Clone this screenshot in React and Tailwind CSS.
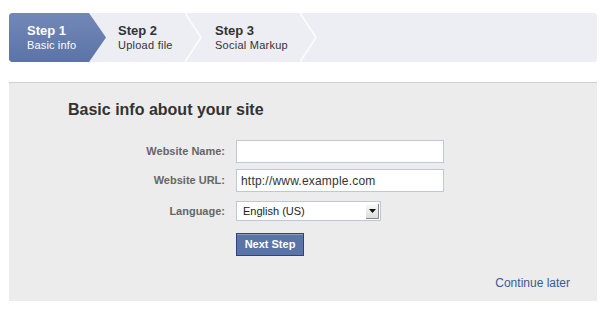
import React from "react";

function Chevron() {
  return (
    <svg width="17" height="49" viewBox="0 0 17 49" className="shrink-0 block">
      <polyline points="0,0 16,24.5 0,49" fill="none" stroke="#fbfbfd" strokeWidth="1.8" />
    </svg>
  );
}

export default function App() {
  const font = { fontFamily: '"Liberation Sans", Arial, sans-serif' };
  return (
    <div className="w-[610px] h-[316px] bg-white pt-[13px] px-[9px] text-[#333]" style={font}>
      {/* Steps bar */}
      <div className="flex h-[49px] w-[588px] bg-[#eceef4] rounded-[3px] overflow-hidden">
        <div
          className="w-[97px] shrink-0 h-full bg-gradient-to-b from-[#7288b8] to-[#5c73a6] text-white pl-[18px] flex flex-col justify-center"
          style={{ clipPath: "polygon(0 0, 80px 0, 97px 50%, 80px 100%, 0 100%)", borderRadius: "3px 0 0 3px" }}
        >
          <div className="text-[13px] font-bold leading-[15px]">Step 1</div>
          <div className="text-[11px] leading-[14px] tracking-[0.15px]">Basic info</div>
        </div>
        <div className="w-[79px] shrink-0 pl-[12px] flex flex-col justify-center">
          <div className="text-[13px] font-bold leading-[15px] text-[#333]">Step 2</div>
          <div className="text-[11px] leading-[14px] tracking-[0.25px] text-[#333]">Upload file</div>
        </div>
        <Chevron />
        <div className="w-[98px] shrink-0 pl-[13px] flex flex-col justify-center">
          <div className="text-[13px] font-bold leading-[15px] text-[#333]">Step 3</div>
          <div className="text-[11px] leading-[14px] tracking-[0.25px] text-[#333]">Social Markup</div>
        </div>
        <Chevron />
      </div>

      {/* Panel */}
      <div className="mt-[20px] w-[588px] h-[219px] bg-[#ececec] border-t border-[#cfcfcf] pt-[17px] pl-[59px] pr-[27px] flex flex-col">
        <h2 className="text-[16px] font-bold leading-[19px] text-[#333]">Basic info about your site</h2>
        <div className="mt-[21px] grid grid-cols-[157px_auto] gap-x-[11px] items-center">
          <label className="text-right text-[11px] font-bold text-[#666]">Website Name:</label>
          <div className="w-[208px] h-[23px] bg-white border border-[#bdc7d8]"></div>

          <label className="text-right text-[11px] font-bold text-[#666] mt-[6px]">Website URL:</label>
          <div className="w-[208px] h-[23px] bg-white border border-[#bdc7d8] mt-[6px] flex items-center pl-[4px] text-[12px] tracking-[0.2px] text-[#333]">
            http://www.example.com
          </div>

          <label className="text-right text-[11px] font-bold text-[#666] mt-[9px]">Language:</label>
          <div className="w-[145px] h-[20px] bg-white border border-[#bdc7d8] mt-[9px] flex items-center justify-between pl-[6px] pr-[1px] text-[11px] text-[#222]">
            <span>English (US)</span>
            <span className="w-[13px] h-[15px] bg-gradient-to-b from-[#fafafa] to-[#dcdcdc] border-r border-b border-[#888] flex items-center justify-center">
              <svg width="7" height="4" viewBox="0 0 7 4"><polygon points="0,0 7,0 3.5,4" fill="#111" /></svg>
            </span>
          </div>

          <div></div>
          <button className="mt-[12px] w-[68px] h-[23px] bg-[#5b74a8] border border-[#29447e] shadow-[inset_0_1px_0_#8a9cc2] text-white text-[11px] font-bold flex items-center justify-center">
            Next Step
          </button>
        </div>
        <div className="mt-[21px] text-right text-[12px] text-[#3b5998] leading-[13px]">Continue later</div>
      </div>
    </div>
  );
}
